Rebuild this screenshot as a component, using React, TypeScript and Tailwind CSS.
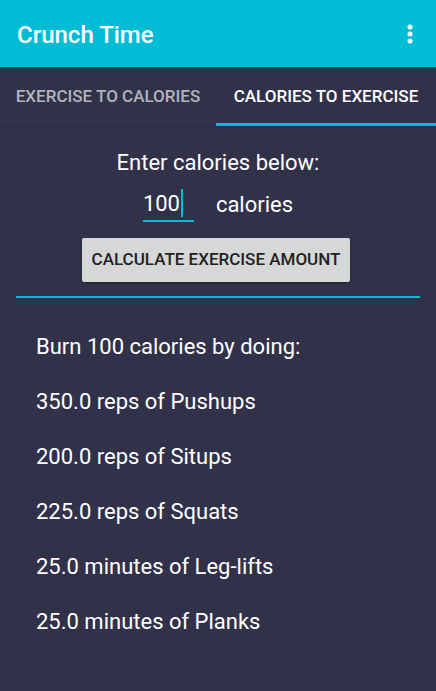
import { useState } from "react";

const results = [
  "350.0 reps of Pushups",
  "200.0 reps of Situps",
  "225.0 reps of Squats",
  "25.0 minutes of Leg-lifts",
  "25.0 minutes of Planks",
];

export default function App() {
  const [tab, setTab] = useState(1);

  return (
    <div className="w-[436px] h-[691px] bg-[#31324a] flex flex-col text-white font-['Roboto',sans-serif] overflow-hidden">
      <header className="h-[67px] bg-[#00bcd4] flex items-center justify-between pl-[17px] pr-[23px] shrink-0">
        <h1 className="text-[24px] font-medium pt-[2px]">Crunch Time</h1>
        <svg width="6" height="20" viewBox="0 0 6 20" fill="white">
          <circle cx="3" cy="3" r="2.5" />
          <circle cx="3" cy="10" r="2.5" />
          <circle cx="3" cy="17" r="2.5" />
        </svg>
      </header>

      <nav className="h-[60px] flex shrink-0 border-b border-[#2b2c40]">
        {["EXERCISE TO CALORIES", "CALORIES TO EXERCISE"].map((label, i) => (
          <button
            key={label}
            onClick={() => setTab(i)}
            className={
              (i === 0 ? "w-[216px] " : "flex-1 ") +
              "flex items-center justify-center pt-[3px] text-[17px] font-medium border-b-[3px] " +
              (tab === i ? "text-white border-[#00bcd4]" : "text-[#b3b3bb] border-transparent")
            }
          >
            {label}
          </button>
        ))}
      </nav>

      <main className="flex flex-col items-center px-4 pt-[21px]">
        <p className="text-[22px] leading-[30px]">Enter calories below:</p>
        <div className="flex items-center mt-[8px] gap-[22px]">
          <div className="w-[51px] h-[36px] border-b-2 border-[#00bcd4] flex items-center text-[22px]">
            100<span className="w-[2px] h-[28px] bg-[#00bcd4] ml-[1px]" />
          </div>
          <span className="text-[22px]">calories</span>
        </div>
        <button className="mt-[16px] w-[268px] h-[44px] ml-[-4px] bg-[#d6d7d7] rounded-[2px] shadow-[0_1px_2px_rgba(0,0,0,0.4)] text-[#222] text-[17px] font-medium">
          CALCULATE EXERCISE AMOUNT
        </button>
        <div className="w-full h-[2px] bg-[#00bcd4] mt-[14px]" />

        <ul className="w-full pl-[20px] pt-[34px] flex flex-col gap-[25px]">
          <li className="text-[22px] leading-[30px]">Burn 100 calories by doing:</li>
          {results.map((r) => (
            <li key={r} className="text-[22px] leading-[30px]">
              {r}
            </li>
          ))}
        </ul>
      </main>
    </div>
  );
}
